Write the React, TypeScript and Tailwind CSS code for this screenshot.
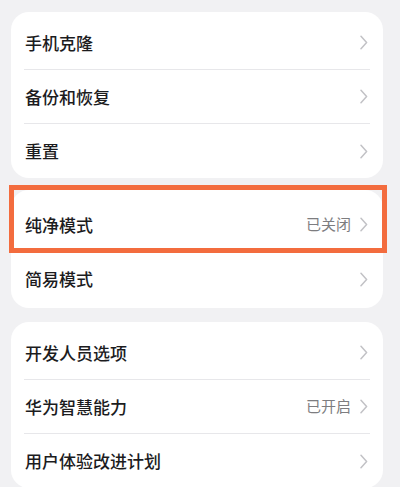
type Item = Readonly<{
  label: string;
  value?: string;
  highlight?: boolean;
}>;

const groups: ReadonlyArray<{ items: Item[]; className: string }> = [
  {
    className: "mt-[12px] pt-1",
    items: [{ label: "手机克隆" }, { label: "备份和恢复" }, { label: "重置" }],
  },
  {
    className: "mt-3 pt-2 pb-[2px]",
    items: [
      { label: "纯净模式", value: "已关闭", highlight: true },
      { label: "简易模式" },
    ],
  },
  {
    className: "mt-[14px] pt-1",
    items: [
      { label: "开发人员选项" },
      { label: "华为智慧能力", value: "已开启" },
      { label: "用户体验改进计划" },
    ],
  },
];

function Chevron() {
  return (
    <svg
      width="8"
      height="15"
      viewBox="0 0 8 15"
      fill="none"
      className="ml-[9px] shrink-0"
      aria-hidden
    >
      <path
        d="M1 1.2L6.6 7.5L1 13.8"
        stroke="#c2c2c6"
        strokeWidth="1.5"
        strokeLinecap="round"
        strokeLinejoin="round"
      />
    </svg>
  );
}

function SettingRow({ item, isLast }: Readonly<{ item: Item; isLast: boolean }>) {
  return (
    <div className="relative px-[13px]">
      <div
        className={`flex h-[54px] items-center pl-[1px] pr-[2px] ${
          isLast ? "" : "border-b border-[#e7e7ea]"
        }`}
      >
        <span className="flex-1 truncate text-[17px] font-medium text-[#1c1c1e]">
          {item.label}
        </span>
        {item.value && (
          <span className="text-[15px] text-[#7d7d80]">{item.value}</span>
        )}
        <Chevron />
      </div>
      {item.highlight && (
        <div
          className="pointer-events-none absolute -top-[13px] -bottom-[1px] -left-[2px] -right-[4px] border-[5px] border-[#f36c3e]"
          aria-hidden
        />
      )}
    </div>
  );
}

export default function App() {
  return (
    <div
      className="h-[487px] w-[400px] overflow-hidden bg-[#f1f1f3]"
      style={{ fontFamily: '"Noto Sans CJK SC", "Noto Sans", sans-serif' }}
    >
      {groups.map((group, gi) => (
        <div
          key={gi}
          className={`mx-[11px] w-[372px] rounded-[18px] bg-white ${group.className}`}
        >
          {group.items.map((item, i) => (
            <SettingRow
              key={item.label}
              item={item}
              isLast={i === group.items.length - 1}
            />
          ))}
        </div>
      ))}
    </div>
  );
}
